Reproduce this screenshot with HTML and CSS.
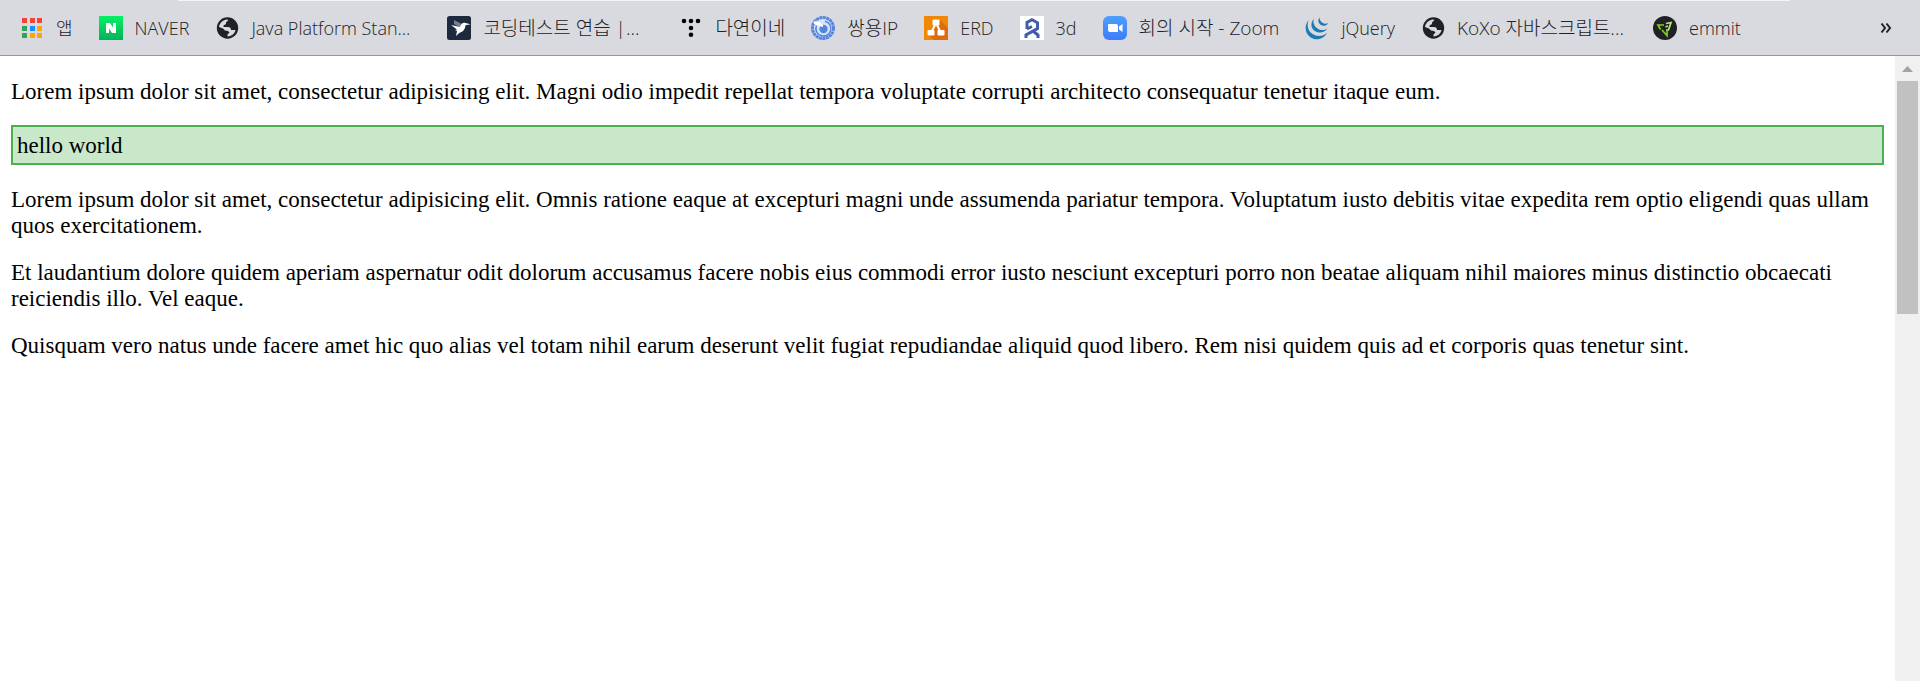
FILE: index.html
```html
<!DOCTYPE html>
<html lang="ko">
<head>
<meta charset="utf-8">
<title>hello world</title>
<link rel="stylesheet" href="styles.css">
</head>
<body>
<nav class="bookmarks" aria-label="북마크">
  <a class="bookmark" href="#"><svg class="icon" viewBox="0 0 24 24"><path fill="#f44336" d="M2 2h5v5H2zM10 2h5v5h-5zM17 2h5v5h-5z"/><path fill="#34a35a" d="M2 10h5v5H2zM2 17h5v5H2z"/><path fill="#1a8cff" d="M10 10h5v5h-5z"/><path fill="#f9a60a" d="M17 10h5v5h-5zM10 17h5v5h-5zM17 17h5v5h-5z"/></svg><span class="label">앱</span></a>
  <a class="bookmark" href="#"><svg class="icon" viewBox="0 0 24 24"><defs><linearGradient id="naver" x2="0" y2="1"><stop stop-color="#03f062"/><stop offset="1" stop-color="#05b25c"/></linearGradient></defs><path fill="url(#naver)" d="M0 0h24v24H0z"/><path fill="#fff" d="M7 7h4l3 4.500V7h3v10h-4l-3-4.500V17H7z"/></svg><span class="label">NAVER</span></a>
  <a class="bookmark long" href="#"><svg class="icon" viewBox="0 0 24 24"><circle cx="12.500" cy="12" r="10.700" fill="#202124"/><path fill="#d9dae0" d="M4 11C4.500 7 8 3.700 12 3.500l1.500.5L11 6.500V8L8.500 9.500V11H13c2 0 3 1 3 3h4.500c-1 4-4 6.200-8 6.500v-2l2-2-1.500-1.500-3-.5-2-2z"/></svg><span class="label">Java Platform Stan...</span></a>
  <a class="bookmark long hangul" href="#"><svg class="icon" viewBox="0 0 24 24"><rect width="24" height="24" rx="2.500" fill="#1d293d"/><path fill="#747f91" d="M7 4l7 3.500-1 4-6-3.500z"/><path fill="#fff" d="M4 9l9 2c.5-3 3-5 5.500-4l5 1.300-5 1c-.5 5-3.500 7-6 7.500L9 20l1-5-2-1 2-.5z"/></svg><span class="label">코딩테스트 연습 |...</span></a>
  <a class="bookmark hangul" href="#"><svg class="icon" viewBox="0 0 24 24"><g fill="#050505"><circle cx="5" cy="5" r="2.300"/><circle cx="12" cy="5" r="2.300"/><circle cx="19" cy="5" r="2.300"/><circle cx="12" cy="12" r="2.300"/><circle cx="12" cy="18.700" r="2.300"/></g></svg><span class="label">다연이네</span></a>
  <a class="bookmark hangul" href="#"><svg class="icon" viewBox="0 0 24 24"><circle cx="12" cy="12" r="10.500" fill="#d5e4fa" stroke="#5683dc" stroke-width="3" stroke-dasharray="3 .5"/><path d="M5.500 9.500A7.500 7.500 0 1 0 14 5.200" fill="none" stroke="#5683dc" stroke-width="1.500"/><circle cx="12.500" cy="13" r="4.200" fill="#5683dc"/><path fill="#fff" d="M3 5l5 1 4 3v2l-4-1-5-2z"/></svg><span class="label">쌍용IP</span></a>
  <a class="bookmark" href="#"><svg class="icon" viewBox="0 0 24 24"><path fill="#f08705" d="M0 0h24v24H0z"/><path fill="#df6c0c" d="M16 4l8 8v12H10l-6-5 8-8z"/><path d="M12 7L7 17M12 7l5 10" stroke="#fff" stroke-width="2"/><g fill="#fff"><rect x="8.500" y="3.500" width="7" height="6" rx="1"/><rect x="3.500" y="14" width="7" height="5.500" rx="1"/><rect x="13.500" y="14" width="7" height="5.500" rx="1"/></g></svg><span class="label">ERD</span></a>
  <a class="bookmark" href="#"><svg class="icon" viewBox="0 0 24 24"><path fill="#fff" d="M0 0h24v24H0z"/><path d="M7 13V6.500l5-2.700 5.500 3v5.700L6 19v3M13 15l5 4v3M7 13l5-2.500" fill="none" stroke="#405daa" stroke-width="3"/></svg><span class="label">3d</span></a>
  <a class="bookmark hangul" href="#"><svg class="icon" viewBox="0 0 24 24"><defs><linearGradient id="meeting" x2="0" y2="1"><stop stop-color="#4d9fff"/><stop offset="1" stop-color="#3c7df8"/></linearGradient></defs><rect width="24" height="24" rx="6" fill="url(#meeting)"/><path fill="#fff" d="M5 8h8q2 0 2 2v6H7q-2 0-2-2zM16 10.500L19.500 8v8L16 13.500z"/></svg><span class="label">회의 시작 - Zoom</span></a>
  <a class="bookmark" href="#"><svg class="icon" viewBox="0 0 24 24"><g fill="#1f79b5"><path d="M3.500 4C-1 10 0 17 5 21c6 4.500 14 2 17-4-4 3.500-10 4-14.500 1C3 15 1.500 10 3.500 4z"/><path d="M9 2.500C5 7 6 12 9.500 14.800c4 3 10 2.200 13-2.300-3 2-7 2-10 0C9 10 7.500 6.500 9 2.500z"/><path d="M14.500 1.500c-2 3-1 5.500 1 7.200 2.500 2 6 1.300 8-1.700-2 1-4.500 1-6-.3-2-1.200-3-3-3-5.200z"/></g></svg><span class="label">jQuery</span></a>
  <a class="bookmark long hangul" href="#"><svg class="icon" viewBox="0 0 24 24"><circle cx="12.500" cy="12" r="10.700" fill="#202124"/><path fill="#d9dae0" d="M4 11C4.500 7 8 3.700 12 3.500l1.500.5L11 6.500V8L8.500 9.500V11H13c2 0 3 1 3 3h4.500c-1 4-4 6.200-8 6.500v-2l2-2-1.500-1.500-3-.5-2-2z"/></svg><span class="label">KoXo 자바스크립트...</span></a>
  <a class="bookmark" href="#"><svg class="icon" viewBox="0 0 24 24"><circle cx="12" cy="12" r="12" fill="#202124"/><g fill="none" stroke-width="1.700"><path d="M11 9H5l2.500 4.500M9 14l5 5.500V15" stroke="#82cf17"/><path d="M13 14h2.500L18 6.500l-5 1M12.500 11l2.500-1" stroke="#b3e876"/></g></svg><span class="label">emmit</span></a>
  <button class="more" type="button" aria-label="북마크 더보기"><svg class="chevrons" viewBox="0 0 12 12"><path d="M1.500 1.500L5 6l-3.500 4.500M6.500 1.500L10 6l-3.500 4.500" fill="none" stroke="#202124" stroke-width="2"/></svg></button>
</nav>
<div class="viewport">
  <main class="content">
    <p>Lorem ipsum dolor sit amet, consectetur adipisicing elit. Magni odio impedit repellat tempora voluptate corrupti architecto consequatur tenetur itaque eum.</p>
    <div class="note">hello world</div>
    <p>Lorem ipsum dolor sit amet, consectetur adipisicing elit. Omnis ratione eaque at excepturi magni unde assumenda pariatur tempora. Voluptatum iusto debitis vitae expedita rem optio eligendi quas ullam quos exercitationem.</p>
    <p>Et laudantium dolore quidem aperiam aspernatur odit dolorum accusamus facere nobis eius commodi error iusto nesciunt excepturi porro non beatae aliquam nihil maiores minus distinctio obcaecati reiciendis illo. Vel eaque.</p>
    <p>Quisquam vero natus unde facere amet hic quo alias vel totam nihil earum deserunt velit fugiat repudiandae aliquid quod libero. Rem nisi quidem quis ad et corporis quas tenetur sint.</p>
  </main>
  <div class="scrollbar">
    <svg class="arrow" viewBox="0 0 11 6"><path fill="#a3a3a3" d="M0 6l5.500-6L11 6z"/></svg>
    <div class="thumb"></div>
  </div>
</div>
</body>
</html>
```
FILE: styles.css
```css
* { box-sizing: border-box; }
body {
  margin: 0;
  min-height: 100vh;
  display: flex;
  flex-direction: column;
  background: #fff;
  color: #000;
}
.bookmarks {
  display: flex;
  align-items: center;
  gap: 26px;
  height: 56px;
  padding: 0 28px 0 20px;
  background: linear-gradient(#f4f5f7, #f4f5f7) 178px 0 / calc(100% - 308px) 1px no-repeat #d9dae0;
  border-bottom: 1px solid #97989c;
  font: 300 18px/24px "Open Sans", "Noto Sans CJK KR", sans-serif;
}
.bookmark {
  display: flex;
  align-items: center;
  gap: 12px;
  flex: none;
  color: #202124;
  text-decoration: none;
  white-space: nowrap;
}
.hangul { font-size: 19px; }
.long { width: 206px; }
.icon { width: 24px; height: 24px; flex: none; }
.more {
  display: flex;
  margin-left: auto;
  padding: 0;
  border: 0;
  background: none;
}
.chevrons { width: 12px; height: 12px; }
.viewport { flex: 1; display: flex; }
.content {
  flex: 1;
  padding: 2px 11px;
  font: 23px/26px "Liberation Serif", serif;
}
.content p { margin: 21px 0 20px; }
.content p + p { margin-top: 21px; }
.note {
  margin-bottom: 22px;
  padding: 6px 4px 4px;
  border: 2px solid #4caf50;
  background: #c9e8ca;
}
.scrollbar {
  width: 25px;
  flex: none;
  display: flex;
  flex-direction: column;
  align-items: center;
  padding: 10px 2px 0;
  background: #f0f0f0;
}
.arrow { width: 11px; height: 6px; }
.thumb { width: 21px; height: 233px; margin-top: 9px; background: #c1c1c1; }
```
